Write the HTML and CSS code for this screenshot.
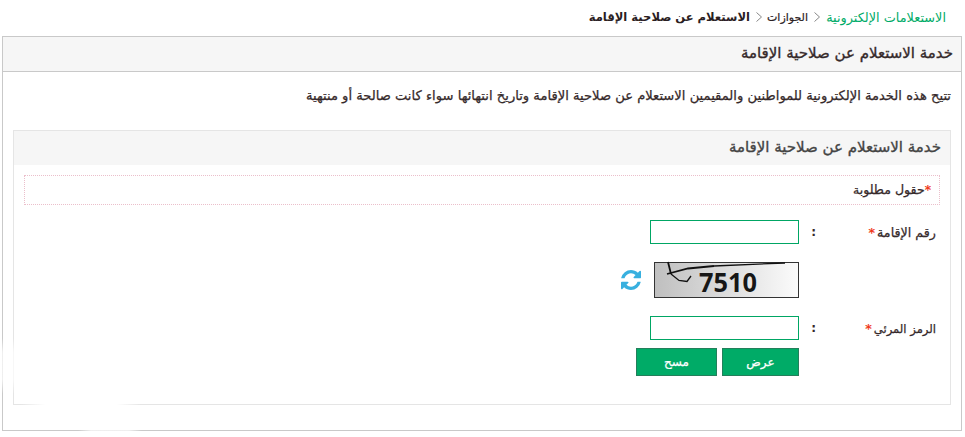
FILE: index.html
```
<!DOCTYPE html>
<html lang="ar" dir="rtl">
<head>
    <meta charset="utf-8">
    <title>خدمة الاستعلام عن صلاحية الإقامة</title>
    <link rel="stylesheet" href="styles.css">
</head>
<body>
    <nav class="breadcrumb">
        <a class="crumb crumb-root" href="#">الاستعلامات الإلكترونية</a>
        <svg class="sep" viewBox="0 0 6 10"><path d="M.5.5 5.5 5 .5 9.5"/></svg>
        <a class="crumb crumb-section" href="#">الجوازات</a>
        <svg class="sep" viewBox="0 0 6 10"><path d="M.5.5 5.5 5 .5 9.5"/></svg>
        <span class="crumb crumb-current">الاستعلام عن صلاحية الإقامة</span>
    </nav>

    <main class="panel">
        <h1 class="panel-title">خدمة الاستعلام عن صلاحية الإقامة</h1>
        <p class="intro">تتيح هذه الخدمة الإلكترونية للمواطنين والمقيمين الاستعلام عن صلاحية الإقامة وتاريخ انتهائها سواء كانت صالحة أو منتهية</p>

        <form class="box">
            <h2 class="box-title">خدمة الاستعلام عن صلاحية الإقامة</h2>
            <div class="required-note"><span class="star">*</span>حقول مطلوبة</div>

            <div class="row">
                <label class="label label-iqama" for="iqama">رقم الإقامة<span class="star">*</span></label>
                <span class="colon">:</span>
                <input class="field" id="iqama" type="text">
            </div>

            <div class="row captcha-row">
                <svg class="captcha" viewBox="0 0 145 36">
                    <defs>
                        <linearGradient id="shade" x1="0" y1="0" x2="1" y2="0">
                            <stop offset="0" stop-color="#bfbfbf"/>
                            <stop offset="1" stop-color="#fbfbfb"/>
                        </linearGradient>
                    </defs>
                    <rect x=".5" y=".5" width="144" height="35" fill="url(#shade)" stroke="#333"/>
                    <text class="captcha-code" x="45" y="30" textLength="58" lengthAdjust="spacingAndGlyphs">7510</text>
                    <path class="scratch" d="M14 0 17 12"/>
                    <path class="scratch" d="M13 12 34 6.500 60 4"/>
                    <path class="scratch thin" d="M60 4 131 1"/>
                    <path class="scratch thin" d="M17 12 25 18.500 33 19.500 37 14"/>
                </svg>
                <svg class="refresh" viewBox="0 0 1536 1536"><path d="M1511 928q0 5-1 7-64 268-268 434.500T764 1536q-146 0-282.500-55T238 1324l-129 129q-19 19-45 19t-45-19-19-45V960q0-26 19-45t45-19h448q26 0 45 19t19 45-19 45l-137 137q71 66 161 102t187 36q134 0 250-65t186-179q11-17 53-117 8-23 30-23h192q13 0 22.500 9.500t9.500 22.500zm25-800v448q0 26-19 45t-45 19h-448q-26 0-45-19t-19-45 19-45l138-138Q969 256 768 256q-134 0-250 65T332 500q-11 17-53 117-8 23-30 23H50q-13 0-22.500-9.500T18 608v-7q65-268 270-434.500T768 0q146 0 284 55.500T1297 212l130-129q19-19 45-19t45 19 19 45z"/></svg>
            </div>

            <div class="row">
                <label class="label label-code" for="code">الرمز المرئي<span class="star">*</span></label>
                <span class="colon">:</span>
                <input class="field" id="code" type="text">
            </div>

            <div class="row buttons">
                <button class="btn btn-show" type="button">عرض</button>
                <button class="btn btn-clear" type="button">مسح</button>
            </div>
        </form>
        <div class="glow glow-corner"></div>
        <div class="glow glow-side"></div>
        <div class="glow glow-bottom"></div>
    </main>
</body>
</html>
```
FILE: styles.css
```
* {
    box-sizing: border-box;
}

body {
    margin: 0;
    background: #fff;
    color: #35292a;
    font-family: "DejaVu Sans", sans-serif;
    font-size: 12px;
}

.breadcrumb {
    display: flex;
    align-items: center;
    height: 36px;
    padding: 0 19px 2px;
}

.crumb {
    white-space: nowrap;
    color: #2a2022;
    text-decoration: none;
}

.breadcrumb .crumb-root {
    width: 120px;
    color: #00ab67;
    font-size: 12.850px;
}

.crumb-section {
    width: 40px;
    font-size: 11px;
    -webkit-text-stroke: 0.2px;
}

.crumb-current {
    width: 161px;
    font-size: 11.550px;
    font-weight: bold;
}

.sep {
    width: 6px;
    height: 10px;
    margin: 0 6px;
    fill: none;
    stroke: #888;
}

.panel {
    position: relative;
    width: 960px;
    height: 395px;
    margin-right: 3px;
    border: 1px solid #c9c9c9;
}

.panel-title {
    height: 35px;
    margin: 0;
    padding-right: 8px;
    border-bottom: 1px solid #c9c9c9;
    background: #f6f6f6;
    font-size: 15px;
    font-weight: normal;
    line-height: 33px;
    -webkit-text-stroke: 0.35px;
}

.intro {
    height: 58px;
    margin: 0;
    padding-right: 10px;
    font-size: 13.120px;
    line-height: 48px;
    white-space: nowrap;
    -webkit-text-stroke: 0.25px;
}

.box {
    height: 275px;
    margin: 0 10px;
    border: 1px solid #e5e5e5;
}

.box-title {
    height: 34px;
    margin: 0 0 10px;
    padding-right: 9px;
    background: #f6f6f6;
    color: #444;
    font-size: 15px;
    font-weight: normal;
    line-height: 33px;
    -webkit-text-stroke: 0.35px;
}

.required-note {
    height: 30px;
    margin: 0 10px 14px;
    padding-right: 8px;
    border: 1px dotted #ebbfcb;
    font-size: 12.600px;
    line-height: 28px;
    -webkit-text-stroke: 0.25px;
}

.star {
    color: #f03010;
}

.row {
    display: flex;
    align-items: center;
    height: 26px;
    padding-right: 14px;
}

.label {
    width: 120px;
    white-space: nowrap;
    -webkit-text-stroke: 0.25px;
}

.label .star {
    margin-right: 2px;
    font-size: 13px;
}

.label-iqama {
    font-size: 12.700px;
}

.label-code {
    font-size: 11.600px;
}

.colon {
    width: 17px;
    font-weight: bold;
}

.field {
    width: 149px;
    height: 24px;
    border: 1px solid #00a664;
    background: #fff;
}

.captcha-row {
    height: 36px;
    margin: 17px 0;
    padding-right: 151px;
}

.captcha {
    width: 145px;
    height: 36px;
    overflow: visible;
}

.captcha-code {
    font: bold 26px "Noto Sans", sans-serif;
    fill: #161616;
    direction: ltr;
}

.scratch {
    fill: none;
    stroke: #111;
    stroke-width: 1.800;
}

.thin {
    stroke-width: 1.300;
}

.refresh {
    width: 20px;
    height: 20px;
    margin-right: 13px;
    fill: #38b0df;
}

.buttons {
    gap: 5px;
    height: 28px;
    margin-top: 7px;
    padding-right: 151px;
}

.btn {
    width: 77px;
    height: 28px;
    padding: 0;
    border: 1px solid #247f5b;
    background: #00ab67;
    color: #fff;
    font: 12px "DejaVu Sans", sans-serif;
    -webkit-text-stroke: 0.25px;
}

.btn-clear {
    width: 81px;
}

/* soft white patches fading the frame lines at the lower corner */
.glow {
    position: absolute;
    background: radial-gradient(closest-side, #fff 60%, transparent);
}

.glow-corner {
    left: 18px;
    bottom: 10px;
    width: 120px;
    height: 30px;
}

.glow-side {
    left: -9px;
    bottom: 34px;
    width: 28px;
    height: 60px;
    opacity: 0.7;
}

.glow-bottom {
    left: 75px;
    bottom: -5px;
    width: 64px;
    height: 10px;
    opacity: 0.7;
}
```
